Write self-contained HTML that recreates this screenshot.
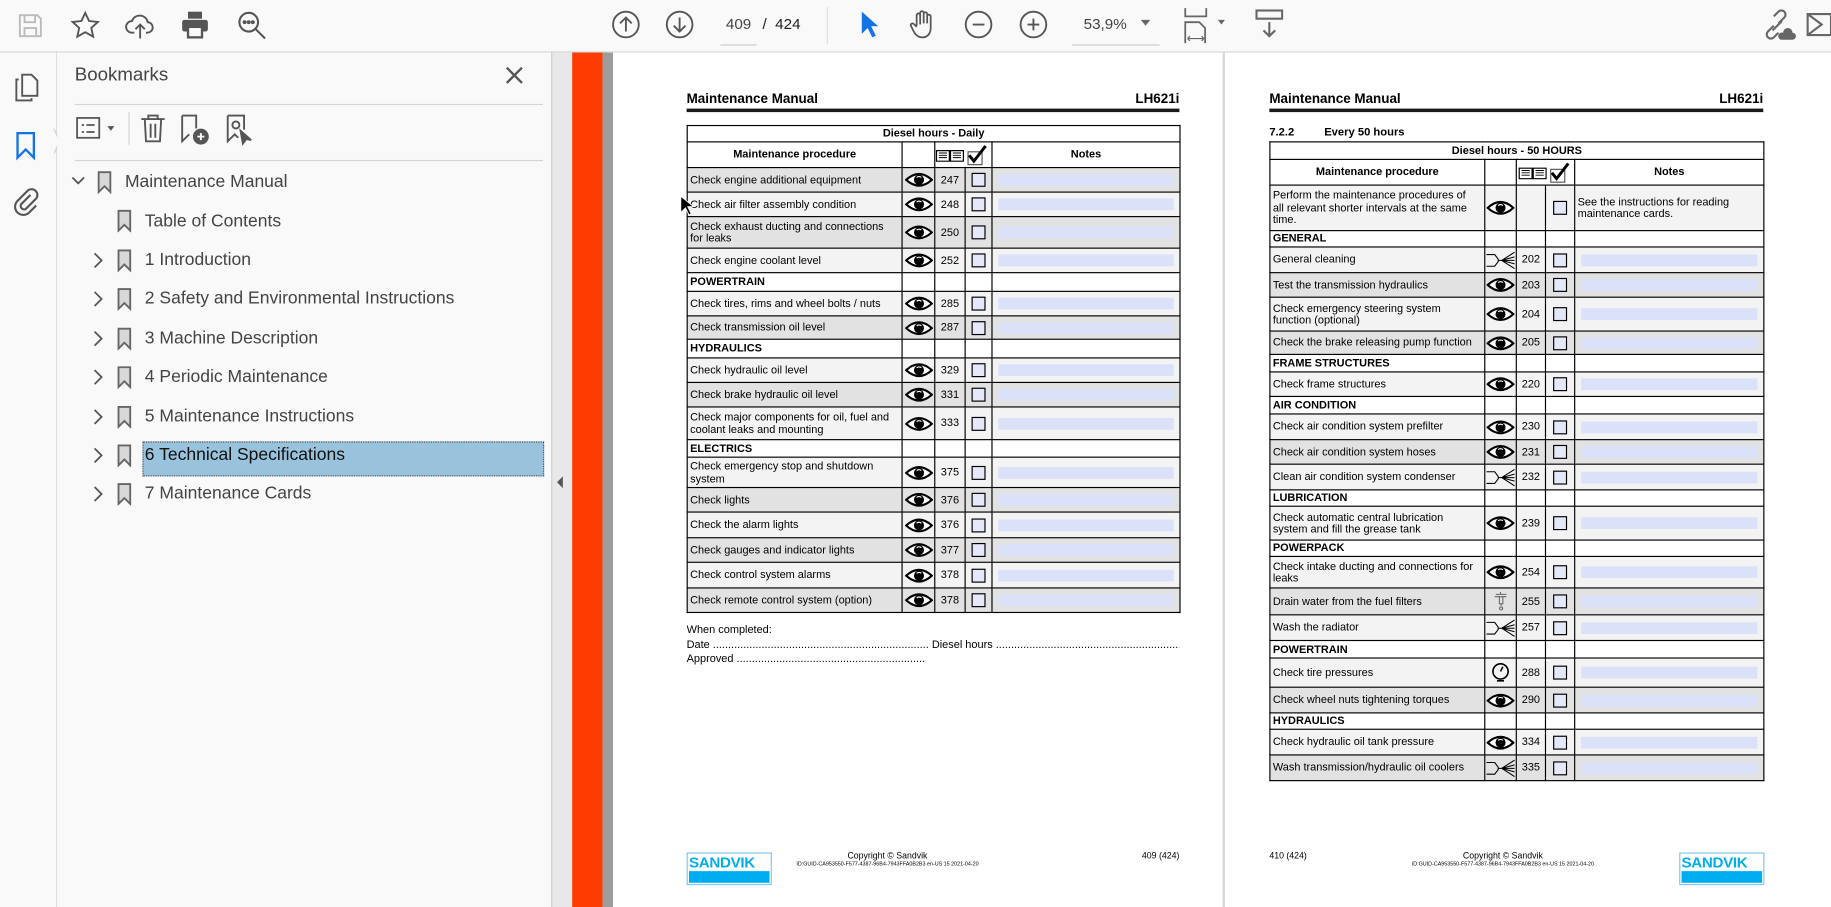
<!DOCTYPE html>
<html><head><meta charset="utf-8">
<style>
html,body{margin:0;padding:0;width:1831px;height:907px;overflow:hidden;background:#fff}
#w{position:absolute;left:0;top:0;width:1568px;height:777px;transform:scale(1.16773);transform-origin:0 0;font-family:"Liberation Sans",Arial,sans-serif;background:#fff}
.a{position:absolute}
#tb{left:0;top:0;width:1568px;height:44px;background:#f9f9f9;border-bottom:1px solid #d6d6d6}
#rail{left:0;top:45px;width:48px;height:732px;background:#f9f9f9;border-right:1px solid #dcdcdc}
#bm{left:49px;top:45px;width:423px;height:732px;background:#f9f9f9}
#split{left:472px;top:45px;width:18px;height:732px;background:#e8e8e8;border-left:1px solid #d0d0d0}
svg{display:block}
.tree{position:absolute;font-size:15px;color:#444;white-space:nowrap}
.pg{position:absolute;top:45px;height:732px;background:#fff}
table{border-collapse:collapse;table-layout:fixed;font-size:9.4px;color:#000}
td{border:1px solid #000;padding:0 2px;line-height:10.5px;overflow:hidden;vertical-align:middle}
tr.g td{background:#e2e2e2}
tr.l td{background:#f3f3f3}
tr.s td{background:#fff;font-weight:bold}
tr.h td{font-weight:bold;text-align:center;background:#fff}
td.c{text-align:center;padding:0}
.cb{width:10px;height:10px;border:1px solid #000;background:#e4e8f8;margin:0 auto}
.nb{height:10px;background:#dae1f8;margin:0 3px}
.hdr{position:absolute;font-weight:bold;font-size:11.5px}
.rule{position:absolute;height:3px;background:#1a1a1a}
.logo{position:absolute;width:71px;height:26px;border:1px solid #7cc8f0;background:#fff}
.logo b{position:absolute;left:1px;top:1px;font-size:13px;color:#00aeef;letter-spacing:-0.3px;line-height:13px}
.logo i{position:absolute;left:1px;right:1px;bottom:1px;height:10px;background:#00aeef}
.ft{position:absolute;font-size:7px;text-align:center}
.dl{position:absolute;font-size:9.4px;white-space:nowrap;overflow:hidden}
</style></head><body><div id="w">

<!-- toolbar -->
<div id="tb" class="a"></div>
<svg class="a" style="left:14px;top:10px" width="24" height="24" viewBox="0 0 24 24" fill="none" stroke="#bbb" stroke-width="1.6"><path d="M3 3h15l3 3v15H3z"/><path d="M7 3v6h9V3M7 21v-7h10v7"/></svg>
<svg class="a" style="left:60px;top:9px" width="26" height="26" viewBox="0 0 26 26" fill="none" stroke="#555" stroke-width="1.6"><path d="M13 2l3.3 7 7.5.8-5.6 5.1 1.6 7.5L13 18.6 6.2 22.4l1.6-7.5L2.2 9.8l7.5-.8z"/></svg>
<svg class="a" style="left:107px;top:9px" width="26" height="26" viewBox="0 0 26 26" fill="none" stroke="#555" stroke-width="1.6"><path d="M8 19H6a5 5 0 0 1 0-10 7 7 0 0 1 13.5 1A4.5 4.5 0 0 1 19 19h-1"/><path d="M13 24V12M9 16l4-4 4 4"/></svg>
<svg class="a" style="left:154px;top:8px" width="26" height="26" viewBox="0 0 26 26" fill="#555"><rect x="7" y="2" width="12" height="6"/><rect x="2" y="9" width="22" height="10" rx="2"/><rect x="7" y="15" width="12" height="9" fill="#f9f9f9" stroke="#555" stroke-width="2"/></svg>
<svg class="a" style="left:202px;top:8px" width="28" height="28" viewBox="0 0 28 28" fill="none" stroke="#555" stroke-width="1.8"><circle cx="11" cy="11" r="8"/><path d="M17 17l8 8"/><circle cx="7.5" cy="11" r=".8" fill="#555"/><circle cx="11" cy="11" r=".8" fill="#555"/><circle cx="14.5" cy="11" r=".8" fill="#555"/></svg>
<svg class="a" style="left:523px;top:8px" width="26" height="26" viewBox="0 0 26 26" fill="none" stroke="#555" stroke-width="1.6"><circle cx="13" cy="13" r="11"/><path d="M13 19V7M8 12l5-5 5 5"/></svg>
<svg class="a" style="left:569px;top:8px" width="26" height="26" viewBox="0 0 26 26" fill="none" stroke="#555" stroke-width="1.6"><circle cx="13" cy="13" r="11"/><path d="M13 7v12M8 14l5 5 5-5"/></svg>
<div class="a" style="left:617px;top:13px;width:31px;font-size:13px;color:#444;text-align:center">409</div>
<div class="a" style="left:617px;top:38px;width:31px;height:1px;background:#ccc"></div>
<div class="a" style="left:653px;top:13px;font-size:13px;color:#222">/&nbsp; 424</div>
<div class="a" style="left:708px;top:6px;width:1px;height:32px;background:#ddd"></div>
<svg class="a" style="left:735px;top:8px" width="18" height="26" viewBox="0 0 18 26"><path d="M3 2v19l5-5 4 8 3-1.5-4-8h6z" fill="#1473e6"/></svg>
<svg class="a" style="left:778px;top:7px" width="26" height="28" viewBox="0 0 26 28" fill="none" stroke="#555" stroke-width="1.5"><path d="M7 15V6a1.5 1.5 0 0 1 3 0v8M10 13V4a1.5 1.5 0 0 1 3 0v9M13 13V5a1.5 1.5 0 0 1 3 0v8M16 13V7a1.5 1.5 0 0 1 3 0v10c0 5-3 8-7 8s-6-2-8-6l-2-4a1.5 1.5 0 0 1 2.5-1.5L7 16"/></svg>
<svg class="a" style="left:825px;top:8px" width="26" height="26" viewBox="0 0 26 26" fill="none" stroke="#555" stroke-width="1.6"><circle cx="13" cy="13" r="11"/><path d="M8 13h10"/></svg>
<svg class="a" style="left:872px;top:8px" width="26" height="26" viewBox="0 0 26 26" fill="none" stroke="#555" stroke-width="1.6"><circle cx="13" cy="13" r="11"/><path d="M8 13h10M13 8v10"/></svg>
<div class="a" style="left:928px;top:13px;font-size:13px;color:#444">53,9%</div>
<div class="a" style="left:977px;top:17px;border:4px solid transparent;border-top:5px solid #666"></div>
<div class="a" style="left:918px;top:38px;width:75px;height:1px;background:#ccc"></div>
<svg class="a" style="left:1013px;top:5px" width="26" height="32" viewBox="0 0 26 32" fill="none" stroke="#666" stroke-width="1.5"><path d="M2 2v7h18V2"/><path d="M2 32V14h12l5 5v13"/><path d="M4 28h14M4 28l2-2M4 28l2 2M18 28l-2-2M18 28l-2 2" stroke-width="1"/></svg>
<div class="a" style="left:1043px;top:17px;border:3.5px solid transparent;border-top:4.5px solid #666"></div>
<svg class="a" style="left:1075px;top:7px" width="24" height="28" viewBox="0 0 24 28" fill="none" stroke="#666" stroke-width="1.8"><rect x="1" y="2" width="22" height="7"/><path d="M12 12v12M7 19l5 5 5-5"/></svg>
<svg class="a" style="left:1508px;top:8px" width="30" height="28" viewBox="0 0 30 28" fill="none" stroke="#666" stroke-width="1.8"><path d="M11 14l-5 5a3.5 3.5 0 0 0 5 5l4-4M15 12l5-5a3.5 3.5 0 0 0-5-5l-4 4M10 18l8-8"/><path d="M17 26h10a3 3 0 0 0 0-6 4 4 0 0 0-8 0 3 3 0 0 0-2 6z" fill="#666" stroke="none"/></svg>
<svg class="a" style="left:1547px;top:10px" width="21" height="22" viewBox="0 0 21 22" fill="none" stroke="#666" stroke-width="1.8"><path d="M1 2h20v18H1zM1 2l12 9L1 20"/></svg>

<!-- left rail -->
<div id="rail" class="a"></div>
<svg class="a" style="left:11px;top:62px" width="24" height="26" viewBox="0 0 24 26" fill="none" stroke="#555" stroke-width="1.6"><path d="M8 2h8l5 5v13H8z"/><path d="M5 6H3v18h13v-2"/></svg>
<svg class="a" style="left:13px;top:112px" width="18" height="26" viewBox="0 0 18 26" fill="none" stroke="#1473e6" stroke-width="2"><path d="M2 2h14v21l-7-7-7 7z"/></svg>
<svg class="a" style="left:46px;top:110px" width="6" height="22" viewBox="0 0 6 22"><path d="M0 0l5 11-5 11" fill="#f9f9f9" stroke="#d0d0d0"/></svg>
<svg class="a" style="left:10px;top:160px" width="26" height="26" viewBox="0 0 26 26" fill="none" stroke="#555" stroke-width="1.8"><path d="M16 7l-8 8a3 3 0 0 0 4 4l9-9a5 5 0 0 0-7-7l-9 9a7 7 0 0 0 10 10l6-6"/></svg>

<!-- bookmarks panel -->
<div id="bm" class="a"></div>
<div class="a" style="left:64px;top:56px;font-size:16px;color:#444">Bookmarks</div>
<svg class="a" style="left:433px;top:57px" width="15" height="15" viewBox="0 0 15 15" stroke="#555" stroke-width="2"><path d="M1 1l13 13M14 1L1 14"/></svg>
<div class="a" style="left:64px;top:89px;width:401px;height:1px;background:#d4d4d4"></div>
<svg class="a" style="left:64px;top:99px" width="40" height="22" viewBox="0 0 40 22" fill="none" stroke="#555" stroke-width="1.5"><rect x="2" y="2" width="19" height="17"/><path d="M6 8h2M6 14h2M10 8h7M10 14h7"/><path d="M28 9l3 4 3-4z" fill="#555" stroke="none"/></svg>
<div class="a" style="left:110px;top:96px;width:1px;height:28px;background:#d4d4d4"></div>
<svg class="a" style="left:119px;top:97px" width="24" height="26" viewBox="0 0 24 26" fill="none" stroke="#555" stroke-width="1.6"><path d="M2 5h20M8 5V2h8v3M5 5l1 19h12l1-19M10 9v12M14 9v12"/></svg>
<svg class="a" style="left:153px;top:97px" width="28" height="28" viewBox="0 0 28 28" fill="none" stroke="#555" stroke-width="1.6"><path d="M3 2h12v11M3 2v22l6-6"/><circle cx="19" cy="20" r="6" fill="#555"/><path d="M19 17v6M16 20h6" stroke="#fff"/></svg>
<svg class="a" style="left:192px;top:97px" width="26" height="28" viewBox="0 0 26 28" fill="none" stroke="#555" stroke-width="1.6"><path d="M3 2h14v12M3 2v22l6-6 3 3"/><circle cx="10" cy="10" r="3"/><path d="M14 15l2 11 3-4 4 1z" fill="#555"/></svg>
<div class="a" style="left:64px;top:137px;width:401px;height:1px;background:#d4d4d4"></div>

<!-- tree -->
<svg class="a" style="left:61px;top:150px" width="12" height="10" viewBox="0 0 12 10" fill="none" stroke="#555" stroke-width="1.5"><path d="M1 2l5 5 5-5"/></svg>
<svg class="a" style="left:83px;top:146px" width="13" height="20" viewBox="0 0 13 20" fill="#d8d8d8" stroke="#666" stroke-width="1.6"><path d="M1.5 1.5h10v17l-5-5-5 5z"/></svg>
<div class="tree" style="left:107px;top:147px">Maintenance Manual</div>

<svg class="a" style="left:100px;top:179px" width="13" height="20" viewBox="0 0 13 20" fill="#d8d8d8" stroke="#666" stroke-width="1.6"><path d="M1.5 1.5h10v17l-5-5-5 5z"/></svg>
<div class="tree" style="left:124px;top:181px">Table of Contents</div>

<svg class="a" style="left:79px;top:216px" width="10" height="14" viewBox="0 0 10 14" fill="none" stroke="#555" stroke-width="1.5"><path d="M2 1l6 6-6 6"/></svg>
<svg class="a" style="left:100px;top:213px" width="13" height="20" viewBox="0 0 13 20" fill="#d8d8d8" stroke="#666" stroke-width="1.6"><path d="M1.5 1.5h10v17l-5-5-5 5z"/></svg>
<div class="tree" style="left:124px;top:214px">1 Introduction</div>

<svg class="a" style="left:79px;top:249px" width="10" height="14" viewBox="0 0 10 14" fill="none" stroke="#555" stroke-width="1.5"><path d="M2 1l6 6-6 6"/></svg>
<svg class="a" style="left:100px;top:246px" width="13" height="20" viewBox="0 0 13 20" fill="#d8d8d8" stroke="#666" stroke-width="1.6"><path d="M1.5 1.5h10v17l-5-5-5 5z"/></svg>
<div class="tree" style="left:124px;top:247px">2 Safety and Environmental Instructions</div>

<svg class="a" style="left:79px;top:283px" width="10" height="14" viewBox="0 0 10 14" fill="none" stroke="#555" stroke-width="1.5"><path d="M2 1l6 6-6 6"/></svg>
<svg class="a" style="left:100px;top:280px" width="13" height="20" viewBox="0 0 13 20" fill="#d8d8d8" stroke="#666" stroke-width="1.6"><path d="M1.5 1.5h10v17l-5-5-5 5z"/></svg>
<div class="tree" style="left:124px;top:281px">3 Machine Description</div>

<svg class="a" style="left:79px;top:316px" width="10" height="14" viewBox="0 0 10 14" fill="none" stroke="#555" stroke-width="1.5"><path d="M2 1l6 6-6 6"/></svg>
<svg class="a" style="left:100px;top:313px" width="13" height="20" viewBox="0 0 13 20" fill="#d8d8d8" stroke="#666" stroke-width="1.6"><path d="M1.5 1.5h10v17l-5-5-5 5z"/></svg>
<div class="tree" style="left:124px;top:314px">4 Periodic Maintenance</div>

<svg class="a" style="left:79px;top:350px" width="10" height="14" viewBox="0 0 10 14" fill="none" stroke="#555" stroke-width="1.5"><path d="M2 1l6 6-6 6"/></svg>
<svg class="a" style="left:100px;top:347px" width="13" height="20" viewBox="0 0 13 20" fill="#d8d8d8" stroke="#666" stroke-width="1.6"><path d="M1.5 1.5h10v17l-5-5-5 5z"/></svg>
<div class="tree" style="left:124px;top:348px">5 Maintenance Instructions</div>

<div class="a" style="left:122px;top:378px;width:342px;height:28px;background:#99c2dc;border:1px dotted #555"></div>
<svg class="a" style="left:79px;top:383px" width="10" height="14" viewBox="0 0 10 14" fill="none" stroke="#555" stroke-width="1.5"><path d="M2 1l6 6-6 6"/></svg>
<svg class="a" style="left:100px;top:380px" width="13" height="20" viewBox="0 0 13 20" fill="#d8d8d8" stroke="#666" stroke-width="1.6"><path d="M1.5 1.5h10v17l-5-5-5 5z"/></svg>
<div class="tree" style="left:124px;top:381px;color:#111">6 Technical Specifications</div>

<svg class="a" style="left:79px;top:416px" width="10" height="14" viewBox="0 0 10 14" fill="none" stroke="#555" stroke-width="1.5"><path d="M2 1l6 6-6 6"/></svg>
<svg class="a" style="left:100px;top:413px" width="13" height="20" viewBox="0 0 13 20" fill="#d8d8d8" stroke="#666" stroke-width="1.6"><path d="M1.5 1.5h10v17l-5-5-5 5z"/></svg>
<div class="tree" style="left:124px;top:414px">7 Maintenance Cards</div>

<div id="split" class="a"></div>
<div class="a" style="left:477px;top:408px;border:5px solid transparent;border-right:5px solid #555;border-left:0"></div>

<!-- document area -->
<div class="a" style="left:490px;top:45px;width:26px;height:732px;background:#ff3c00"></div>
<div class="a" style="left:516px;top:45px;width:9px;height:732px;background:#9c9c9c"></div>
<div class="pg" style="left:525px;width:522px"></div>
<div class="a" style="left:1047px;top:45px;width:2px;height:732px;background:#d8d8d8"></div>
<div class="pg" style="left:1049px;width:519px"></div>

<!-- PAGE 1 -->
<div class="hdr" style="left:588px;top:79px">Maintenance Manual</div>
<div class="hdr" style="left:960px;top:79px;width:50px;text-align:right">LH621i</div>
<div class="rule" style="left:588px;top:93px;width:422px"></div>

<table class="a" style="left:588px;top:107px;width:422px;border:1.5px solid #000">
<colgroup><col style="width:184px"><col style="width:28px"><col style="width:26px"><col style="width:23px"><col style="width:161px"></colgroup>
<tr class="h" style="height:14px"><td colspan="5">Diesel hours - Daily</td></tr>
<tr class="h" style="height:22px"><td>Maintenance procedure</td><td></td><td colspan="2" class="c"><svg width="48" height="18" viewBox="0 0 48 18" style="margin:0 auto"><path d="M1 5h11v9H1zM13 5h11v9H13z" fill="#fff" stroke="#000"/><path d="M3 7h7M3 9h7M3 11h7M15 7h7M15 9h7M15 11h7" stroke="#000" stroke-width=".8"/><rect x="28" y="6" width="12" height="11" fill="#fff" stroke="#555"/><path d="M29 9l4 5 10-13" fill="none" stroke="#000" stroke-width="2.5"/></svg></td><td>Notes</td></tr>
<tr class="g" style="height:21px"><td>Check engine additional equipment</td><td class="c"><svg width="24" height="14" viewBox="0 0 24 14" style="margin:auto"><path d="M1 7Q12-3 23 7 12 17 1 7z" fill="#fff" stroke="#000" stroke-width="1.8"/><circle cx="12" cy="7" r="4.3"/><path d="M10 5a3 3 0 0 1 4 0" stroke="#fff" fill="none"/></svg></td><td class="c">247</td><td class="c"><div class="cb"></div></td><td><div class="nb"></div></td></tr>
<tr class="l" style="height:21px"><td>Check air filter assembly condition</td><td class="c"><svg width="24" height="14" viewBox="0 0 24 14" style="margin:auto"><path d="M1 7Q12-3 23 7 12 17 1 7z" fill="#fff" stroke="#000" stroke-width="1.8"/><circle cx="12" cy="7" r="4.3"/><path d="M10 5a3 3 0 0 1 4 0" stroke="#fff" fill="none"/></svg></td><td class="c">248</td><td class="c"><div class="cb"></div></td><td><div class="nb"></div></td></tr>
<tr class="g" style="height:27px"><td>Check exhaust ducting and connections for leaks</td><td class="c"><svg width="24" height="14" viewBox="0 0 24 14" style="margin:auto"><path d="M1 7Q12-3 23 7 12 17 1 7z" fill="#fff" stroke="#000" stroke-width="1.8"/><circle cx="12" cy="7" r="4.3"/><path d="M10 5a3 3 0 0 1 4 0" stroke="#fff" fill="none"/></svg></td><td class="c">250</td><td class="c"><div class="cb"></div></td><td><div class="nb"></div></td></tr>
<tr class="l" style="height:21px"><td>Check engine coolant level</td><td class="c"><svg width="24" height="14" viewBox="0 0 24 14" style="margin:auto"><path d="M1 7Q12-3 23 7 12 17 1 7z" fill="#fff" stroke="#000" stroke-width="1.8"/><circle cx="12" cy="7" r="4.3"/><path d="M10 5a3 3 0 0 1 4 0" stroke="#fff" fill="none"/></svg></td><td class="c">252</td><td class="c"><div class="cb"></div></td><td><div class="nb"></div></td></tr>
<tr class="s" style="height:16px"><td>POWERTRAIN</td><td></td><td></td><td></td><td></td></tr>
<tr class="l" style="height:21px"><td>Check tires, rims and wheel bolts / nuts</td><td class="c"><svg width="24" height="14" viewBox="0 0 24 14" style="margin:auto"><path d="M1 7Q12-3 23 7 12 17 1 7z" fill="#fff" stroke="#000" stroke-width="1.8"/><circle cx="12" cy="7" r="4.3"/><path d="M10 5a3 3 0 0 1 4 0" stroke="#fff" fill="none"/></svg></td><td class="c">285</td><td class="c"><div class="cb"></div></td><td><div class="nb"></div></td></tr>
<tr class="g" style="height:20px"><td>Check transmission oil level</td><td class="c"><svg width="24" height="14" viewBox="0 0 24 14" style="margin:auto"><path d="M1 7Q12-3 23 7 12 17 1 7z" fill="#fff" stroke="#000" stroke-width="1.8"/><circle cx="12" cy="7" r="4.3"/><path d="M10 5a3 3 0 0 1 4 0" stroke="#fff" fill="none"/></svg></td><td class="c">287</td><td class="c"><div class="cb"></div></td><td><div class="nb"></div></td></tr>
<tr class="s" style="height:16px"><td>HYDRAULICS</td><td></td><td></td><td></td><td></td></tr>
<tr class="l" style="height:21px"><td>Check hydraulic oil level</td><td class="c"><svg width="24" height="14" viewBox="0 0 24 14" style="margin:auto"><path d="M1 7Q12-3 23 7 12 17 1 7z" fill="#fff" stroke="#000" stroke-width="1.8"/><circle cx="12" cy="7" r="4.3"/><path d="M10 5a3 3 0 0 1 4 0" stroke="#fff" fill="none"/></svg></td><td class="c">329</td><td class="c"><div class="cb"></div></td><td><div class="nb"></div></td></tr>
<tr class="g" style="height:21px"><td>Check brake hydraulic oil level</td><td class="c"><svg width="24" height="14" viewBox="0 0 24 14" style="margin:auto"><path d="M1 7Q12-3 23 7 12 17 1 7z" fill="#fff" stroke="#000" stroke-width="1.8"/><circle cx="12" cy="7" r="4.3"/><path d="M10 5a3 3 0 0 1 4 0" stroke="#fff" fill="none"/></svg></td><td class="c">331</td><td class="c"><div class="cb"></div></td><td><div class="nb"></div></td></tr>
<tr class="l" style="height:28px"><td>Check major components for oil, fuel and coolant leaks and mounting</td><td class="c"><svg width="24" height="14" viewBox="0 0 24 14" style="margin:auto"><path d="M1 7Q12-3 23 7 12 17 1 7z" fill="#fff" stroke="#000" stroke-width="1.8"/><circle cx="12" cy="7" r="4.3"/><path d="M10 5a3 3 0 0 1 4 0" stroke="#fff" fill="none"/></svg></td><td class="c">333</td><td class="c"><div class="cb"></div></td><td><div class="nb"></div></td></tr>
<tr class="s" style="height:15px"><td>ELECTRICS</td><td></td><td></td><td></td><td></td></tr>
<tr class="l" style="height:26px"><td>Check emergency stop and shutdown system</td><td class="c"><svg width="24" height="14" viewBox="0 0 24 14" style="margin:auto"><path d="M1 7Q12-3 23 7 12 17 1 7z" fill="#fff" stroke="#000" stroke-width="1.8"/><circle cx="12" cy="7" r="4.3"/><path d="M10 5a3 3 0 0 1 4 0" stroke="#fff" fill="none"/></svg></td><td class="c">375</td><td class="c"><div class="cb"></div></td><td><div class="nb"></div></td></tr>
<tr class="g" style="height:21px"><td>Check lights</td><td class="c"><svg width="24" height="14" viewBox="0 0 24 14" style="margin:auto"><path d="M1 7Q12-3 23 7 12 17 1 7z" fill="#fff" stroke="#000" stroke-width="1.8"/><circle cx="12" cy="7" r="4.3"/><path d="M10 5a3 3 0 0 1 4 0" stroke="#fff" fill="none"/></svg></td><td class="c">376</td><td class="c"><div class="cb"></div></td><td><div class="nb"></div></td></tr>
<tr class="l" style="height:22px"><td>Check the alarm lights</td><td class="c"><svg width="24" height="14" viewBox="0 0 24 14" style="margin:auto"><path d="M1 7Q12-3 23 7 12 17 1 7z" fill="#fff" stroke="#000" stroke-width="1.8"/><circle cx="12" cy="7" r="4.3"/><path d="M10 5a3 3 0 0 1 4 0" stroke="#fff" fill="none"/></svg></td><td class="c">376</td><td class="c"><div class="cb"></div></td><td><div class="nb"></div></td></tr>
<tr class="g" style="height:21px"><td>Check gauges and indicator lights</td><td class="c"><svg width="24" height="14" viewBox="0 0 24 14" style="margin:auto"><path d="M1 7Q12-3 23 7 12 17 1 7z" fill="#fff" stroke="#000" stroke-width="1.8"/><circle cx="12" cy="7" r="4.3"/><path d="M10 5a3 3 0 0 1 4 0" stroke="#fff" fill="none"/></svg></td><td class="c">377</td><td class="c"><div class="cb"></div></td><td><div class="nb"></div></td></tr>
<tr class="l" style="height:22px"><td>Check control system alarms</td><td class="c"><svg width="24" height="14" viewBox="0 0 24 14" style="margin:auto"><path d="M1 7Q12-3 23 7 12 17 1 7z" fill="#fff" stroke="#000" stroke-width="1.8"/><circle cx="12" cy="7" r="4.3"/><path d="M10 5a3 3 0 0 1 4 0" stroke="#fff" fill="none"/></svg></td><td class="c">378</td><td class="c"><div class="cb"></div></td><td><div class="nb"></div></td></tr>
<tr class="g" style="height:21px"><td>Check remote control system (option)</td><td class="c"><svg width="24" height="14" viewBox="0 0 24 14" style="margin:auto"><path d="M1 7Q12-3 23 7 12 17 1 7z" fill="#fff" stroke="#000" stroke-width="1.8"/><circle cx="12" cy="7" r="4.3"/><path d="M10 5a3 3 0 0 1 4 0" stroke="#fff" fill="none"/></svg></td><td class="c">378</td><td class="c"><div class="cb"></div></td><td><div class="nb"></div></td></tr>
</table>

<div class="dl" style="left:588px;top:533px">When completed:</div>
<div class="dl" style="left:588px;top:546px;width:208px">Date ................................................................................................................</div>
<div class="dl" style="left:798px;top:546px;width:212px">Diesel hours .........................................................................................................</div>
<div class="dl" style="left:588px;top:558px;width:205px">Approved ..........................................................................................................</div>
<svg class="a" style="left:582px;top:167px" width="12" height="18" viewBox="0 0 12 18"><path d="M1 1v14l4-4 3 6 2-1-3-6h5z" fill="#000" stroke="#fff" stroke-width=".8"/></svg>

<div class="logo" style="left:588px;top:730px"><b>SANDVIK</b><i></i></div>
<div class="ft" style="left:680px;top:728px;width:160px;font-size:7.5px">Copyright © Sandvik</div>
<div class="ft" style="left:680px;top:737px;width:160px;font-size:4.6px;white-space:nowrap">ID:GUID-CA953550-F577-4387-96B4-7943FFA0B2B3 en-US 15 2021-04-20</div>
<div class="ft" style="left:960px;top:728px;width:50px;text-align:right;font-size:7.5px">409 (424)</div>

<!-- PAGE 2 -->
<div class="hdr" style="left:1087px;top:79px">Maintenance Manual</div>
<div class="hdr" style="left:1460px;top:79px;width:50px;text-align:right">LH621i</div>
<div class="rule" style="left:1087px;top:93px;width:423px"></div>
<div class="a" style="left:1087px;top:108px;font-size:9.6px;font-weight:bold">7.2.2</div>
<div class="a" style="left:1134px;top:108px;font-size:9.6px;font-weight:bold">Every 50 hours</div>

<table class="a" style="left:1087px;top:121px;width:423px;border:1.5px solid #000">
<colgroup><col style="width:184px"><col style="width:27px"><col style="width:25px"><col style="width:25px"><col style="width:162px"></colgroup>
<tr class="h" style="height:15px"><td colspan="5">Diesel hours - 50 HOURS</td></tr>
<tr class="h" style="height:22px"><td>Maintenance procedure</td><td></td><td colspan="2" class="c"><svg width="48" height="18" viewBox="0 0 48 18" style="margin:0 auto"><path d="M1 5h11v9H1zM13 5h11v9H13z" fill="#fff" stroke="#000"/><path d="M3 7h7M3 9h7M3 11h7M15 7h7M15 9h7M15 11h7" stroke="#000" stroke-width=".8"/><rect x="28" y="6" width="12" height="11" fill="#fff" stroke="#555"/><path d="M29 9l4 5 10-13" fill="none" stroke="#000" stroke-width="2.5"/></svg></td><td>Notes</td></tr>
<tr class="l" style="height:39px"><td>Perform the maintenance procedures of<br>all relevant shorter intervals at the same<br>time.</td><td class="c"><svg width="24" height="14" viewBox="0 0 24 14" style="margin:auto"><path d="M1 7Q12-3 23 7 12 17 1 7z" fill="#fff" stroke="#000" stroke-width="1.8"/><circle cx="12" cy="7" r="4.3"/><path d="M10 5a3 3 0 0 1 4 0" stroke="#fff" fill="none"/></svg></td><td></td><td class="c"><div class="cb"></div></td><td>See the instructions for reading maintenance cards.</td></tr>
<tr class="s" style="height:14px"><td>GENERAL</td><td></td><td></td><td></td><td></td></tr>
<tr class="l" style="height:22px"><td>General cleaning</td><td class="c"><svg width="26" height="16" viewBox="0 0 26 16" style="margin:auto" fill="none" stroke="#000" stroke-width=".9"><path d="M1 3h7l3 4v2l-3 4H1M11 8h3M14 8l11-7M14 8l11-3M14 8h11M14 8l11 3M14 8l11 7"/></svg></td><td class="c">202</td><td class="c"><div class="cb"></div></td><td><div class="nb"></div></td></tr>
<tr class="g" style="height:21px"><td>Test the transmission hydraulics</td><td class="c"><svg width="24" height="14" viewBox="0 0 24 14" style="margin:auto"><path d="M1 7Q12-3 23 7 12 17 1 7z" fill="#fff" stroke="#000" stroke-width="1.8"/><circle cx="12" cy="7" r="4.3"/><path d="M10 5a3 3 0 0 1 4 0" stroke="#fff" fill="none"/></svg></td><td class="c">203</td><td class="c"><div class="cb"></div></td><td><div class="nb"></div></td></tr>
<tr class="l" style="height:29px"><td>Check emergency steering system function (optional)</td><td class="c"><svg width="24" height="14" viewBox="0 0 24 14" style="margin:auto"><path d="M1 7Q12-3 23 7 12 17 1 7z" fill="#fff" stroke="#000" stroke-width="1.8"/><circle cx="12" cy="7" r="4.3"/><path d="M10 5a3 3 0 0 1 4 0" stroke="#fff" fill="none"/></svg></td><td class="c">204</td><td class="c"><div class="cb"></div></td><td><div class="nb"></div></td></tr>
<tr class="g" style="height:20px"><td style="white-space:nowrap">Check the brake releasing pump function</td><td class="c"><svg width="24" height="14" viewBox="0 0 24 14" style="margin:auto"><path d="M1 7Q12-3 23 7 12 17 1 7z" fill="#fff" stroke="#000" stroke-width="1.8"/><circle cx="12" cy="7" r="4.3"/><path d="M10 5a3 3 0 0 1 4 0" stroke="#fff" fill="none"/></svg></td><td class="c">205</td><td class="c"><div class="cb"></div></td><td><div class="nb"></div></td></tr>
<tr class="s" style="height:15px"><td>FRAME STRUCTURES</td><td></td><td></td><td></td><td></td></tr>
<tr class="l" style="height:21px"><td>Check frame structures</td><td class="c"><svg width="24" height="14" viewBox="0 0 24 14" style="margin:auto"><path d="M1 7Q12-3 23 7 12 17 1 7z" fill="#fff" stroke="#000" stroke-width="1.8"/><circle cx="12" cy="7" r="4.3"/><path d="M10 5a3 3 0 0 1 4 0" stroke="#fff" fill="none"/></svg></td><td class="c">220</td><td class="c"><div class="cb"></div></td><td><div class="nb"></div></td></tr>
<tr class="s" style="height:15px"><td>AIR CONDITION</td><td></td><td></td><td></td><td></td></tr>
<tr class="l" style="height:22px"><td>Check air condition system prefilter</td><td class="c"><svg width="24" height="14" viewBox="0 0 24 14" style="margin:auto"><path d="M1 7Q12-3 23 7 12 17 1 7z" fill="#fff" stroke="#000" stroke-width="1.8"/><circle cx="12" cy="7" r="4.3"/><path d="M10 5a3 3 0 0 1 4 0" stroke="#fff" fill="none"/></svg></td><td class="c">230</td><td class="c"><div class="cb"></div></td><td><div class="nb"></div></td></tr>
<tr class="g" style="height:21px"><td>Check air condition system hoses</td><td class="c"><svg width="24" height="14" viewBox="0 0 24 14" style="margin:auto"><path d="M1 7Q12-3 23 7 12 17 1 7z" fill="#fff" stroke="#000" stroke-width="1.8"/><circle cx="12" cy="7" r="4.3"/><path d="M10 5a3 3 0 0 1 4 0" stroke="#fff" fill="none"/></svg></td><td class="c">231</td><td class="c"><div class="cb"></div></td><td><div class="nb"></div></td></tr>
<tr class="l" style="height:22px"><td>Clean air condition system condenser</td><td class="c"><svg width="26" height="16" viewBox="0 0 26 16" style="margin:auto" fill="none" stroke="#000" stroke-width=".9"><path d="M1 3h7l3 4v2l-3 4H1M11 8h3M14 8l11-7M14 8l11-3M14 8h11M14 8l11 3M14 8l11 7"/></svg></td><td class="c">232</td><td class="c"><div class="cb"></div></td><td><div class="nb"></div></td></tr>
<tr class="s" style="height:14px"><td>LUBRICATION</td><td></td><td></td><td></td><td></td></tr>
<tr class="l" style="height:29px"><td>Check automatic central lubrication<br>system and fill the grease tank</td><td class="c"><svg width="24" height="14" viewBox="0 0 24 14" style="margin:auto"><path d="M1 7Q12-3 23 7 12 17 1 7z" fill="#fff" stroke="#000" stroke-width="1.8"/><circle cx="12" cy="7" r="4.3"/><path d="M10 5a3 3 0 0 1 4 0" stroke="#fff" fill="none"/></svg></td><td class="c">239</td><td class="c"><div class="cb"></div></td><td><div class="nb"></div></td></tr>
<tr class="s" style="height:14px"><td>POWERPACK</td><td></td><td></td><td></td><td></td></tr>
<tr class="l" style="height:27px"><td>Check intake ducting and connections for leaks</td><td class="c"><svg width="24" height="14" viewBox="0 0 24 14" style="margin:auto"><path d="M1 7Q12-3 23 7 12 17 1 7z" fill="#fff" stroke="#000" stroke-width="1.8"/><circle cx="12" cy="7" r="4.3"/><path d="M10 5a3 3 0 0 1 4 0" stroke="#fff" fill="none"/></svg></td><td class="c">254</td><td class="c"><div class="cb"></div></td><td><div class="nb"></div></td></tr>
<tr class="g" style="height:23px"><td>Drain water from the fuel filters</td><td class="c"><svg width="12" height="18" viewBox="0 0 12 18" style="margin:auto" fill="none" stroke="#666" stroke-width=".9"><path d="M2 3h9M6 1v2M1 5h10M5 5v6h3V5M6.5 11v2"/><circle cx="6.5" cy="15" r="1.3"/></svg></td><td class="c">255</td><td class="c"><div class="cb"></div></td><td><div class="nb"></div></td></tr>
<tr class="l" style="height:22px"><td>Wash the radiator</td><td class="c"><svg width="26" height="16" viewBox="0 0 26 16" style="margin:auto" fill="none" stroke="#000" stroke-width=".9"><path d="M1 3h7l3 4v2l-3 4H1M11 8h3M14 8l11-7M14 8l11-3M14 8h11M14 8l11 3M14 8l11 7"/></svg></td><td class="c">257</td><td class="c"><div class="cb"></div></td><td><div class="nb"></div></td></tr>
<tr class="s" style="height:15px"><td>POWERTRAIN</td><td></td><td></td><td></td><td></td></tr>
<tr class="l" style="height:25px"><td>Check tire pressures</td><td class="c"><svg width="16" height="18" viewBox="0 0 16 18" style="margin:auto" fill="none" stroke="#000" stroke-width="1.4"><circle cx="8" cy="8" r="6.5"/><path d="M8 8l2-4M5 16h6"/></svg></td><td class="c">288</td><td class="c"><div class="cb"></div></td><td><div class="nb"></div></td></tr>
<tr class="g" style="height:22px"><td>Check wheel nuts tightening torques</td><td class="c"><svg width="24" height="14" viewBox="0 0 24 14" style="margin:auto"><path d="M1 7Q12-3 23 7 12 17 1 7z" fill="#fff" stroke="#000" stroke-width="1.8"/><circle cx="12" cy="7" r="4.3"/><path d="M10 5a3 3 0 0 1 4 0" stroke="#fff" fill="none"/></svg></td><td class="c">290</td><td class="c"><div class="cb"></div></td><td><div class="nb"></div></td></tr>
<tr class="s" style="height:14px"><td>HYDRAULICS</td><td></td><td></td><td></td><td></td></tr>
<tr class="l" style="height:22px"><td>Check hydraulic oil tank pressure</td><td class="c"><svg width="24" height="14" viewBox="0 0 24 14" style="margin:auto"><path d="M1 7Q12-3 23 7 12 17 1 7z" fill="#fff" stroke="#000" stroke-width="1.8"/><circle cx="12" cy="7" r="4.3"/><path d="M10 5a3 3 0 0 1 4 0" stroke="#fff" fill="none"/></svg></td><td class="c">334</td><td class="c"><div class="cb"></div></td><td><div class="nb"></div></td></tr>
<tr class="g" style="height:22px"><td style="white-space:nowrap">Wash transmission/hydraulic oil coolers</td><td class="c"><svg width="26" height="16" viewBox="0 0 26 16" style="margin:auto" fill="none" stroke="#000" stroke-width=".9"><path d="M1 3h7l3 4v2l-3 4H1M11 8h3M14 8l11-7M14 8l11-3M14 8h11M14 8l11 3M14 8l11 7"/></svg></td><td class="c">335</td><td class="c"><div class="cb"></div></td><td><div class="nb"></div></td></tr>
</table>

<div class="ft" style="left:1087px;top:728px;width:50px;text-align:left;font-size:7.5px">410 (424)</div>
<div class="ft" style="left:1207px;top:728px;width:160px;font-size:7.5px">Copyright © Sandvik</div>
<div class="ft" style="left:1207px;top:737px;width:160px;font-size:4.6px;white-space:nowrap">ID:GUID-CA953550-F577-4387-96B4-7943FFA0B2B3 en-US 15 2021-04-20</div>
<div class="logo" style="left:1438px;top:730px"><b>SANDVIK</b><i></i></div>

</div></body></html>
